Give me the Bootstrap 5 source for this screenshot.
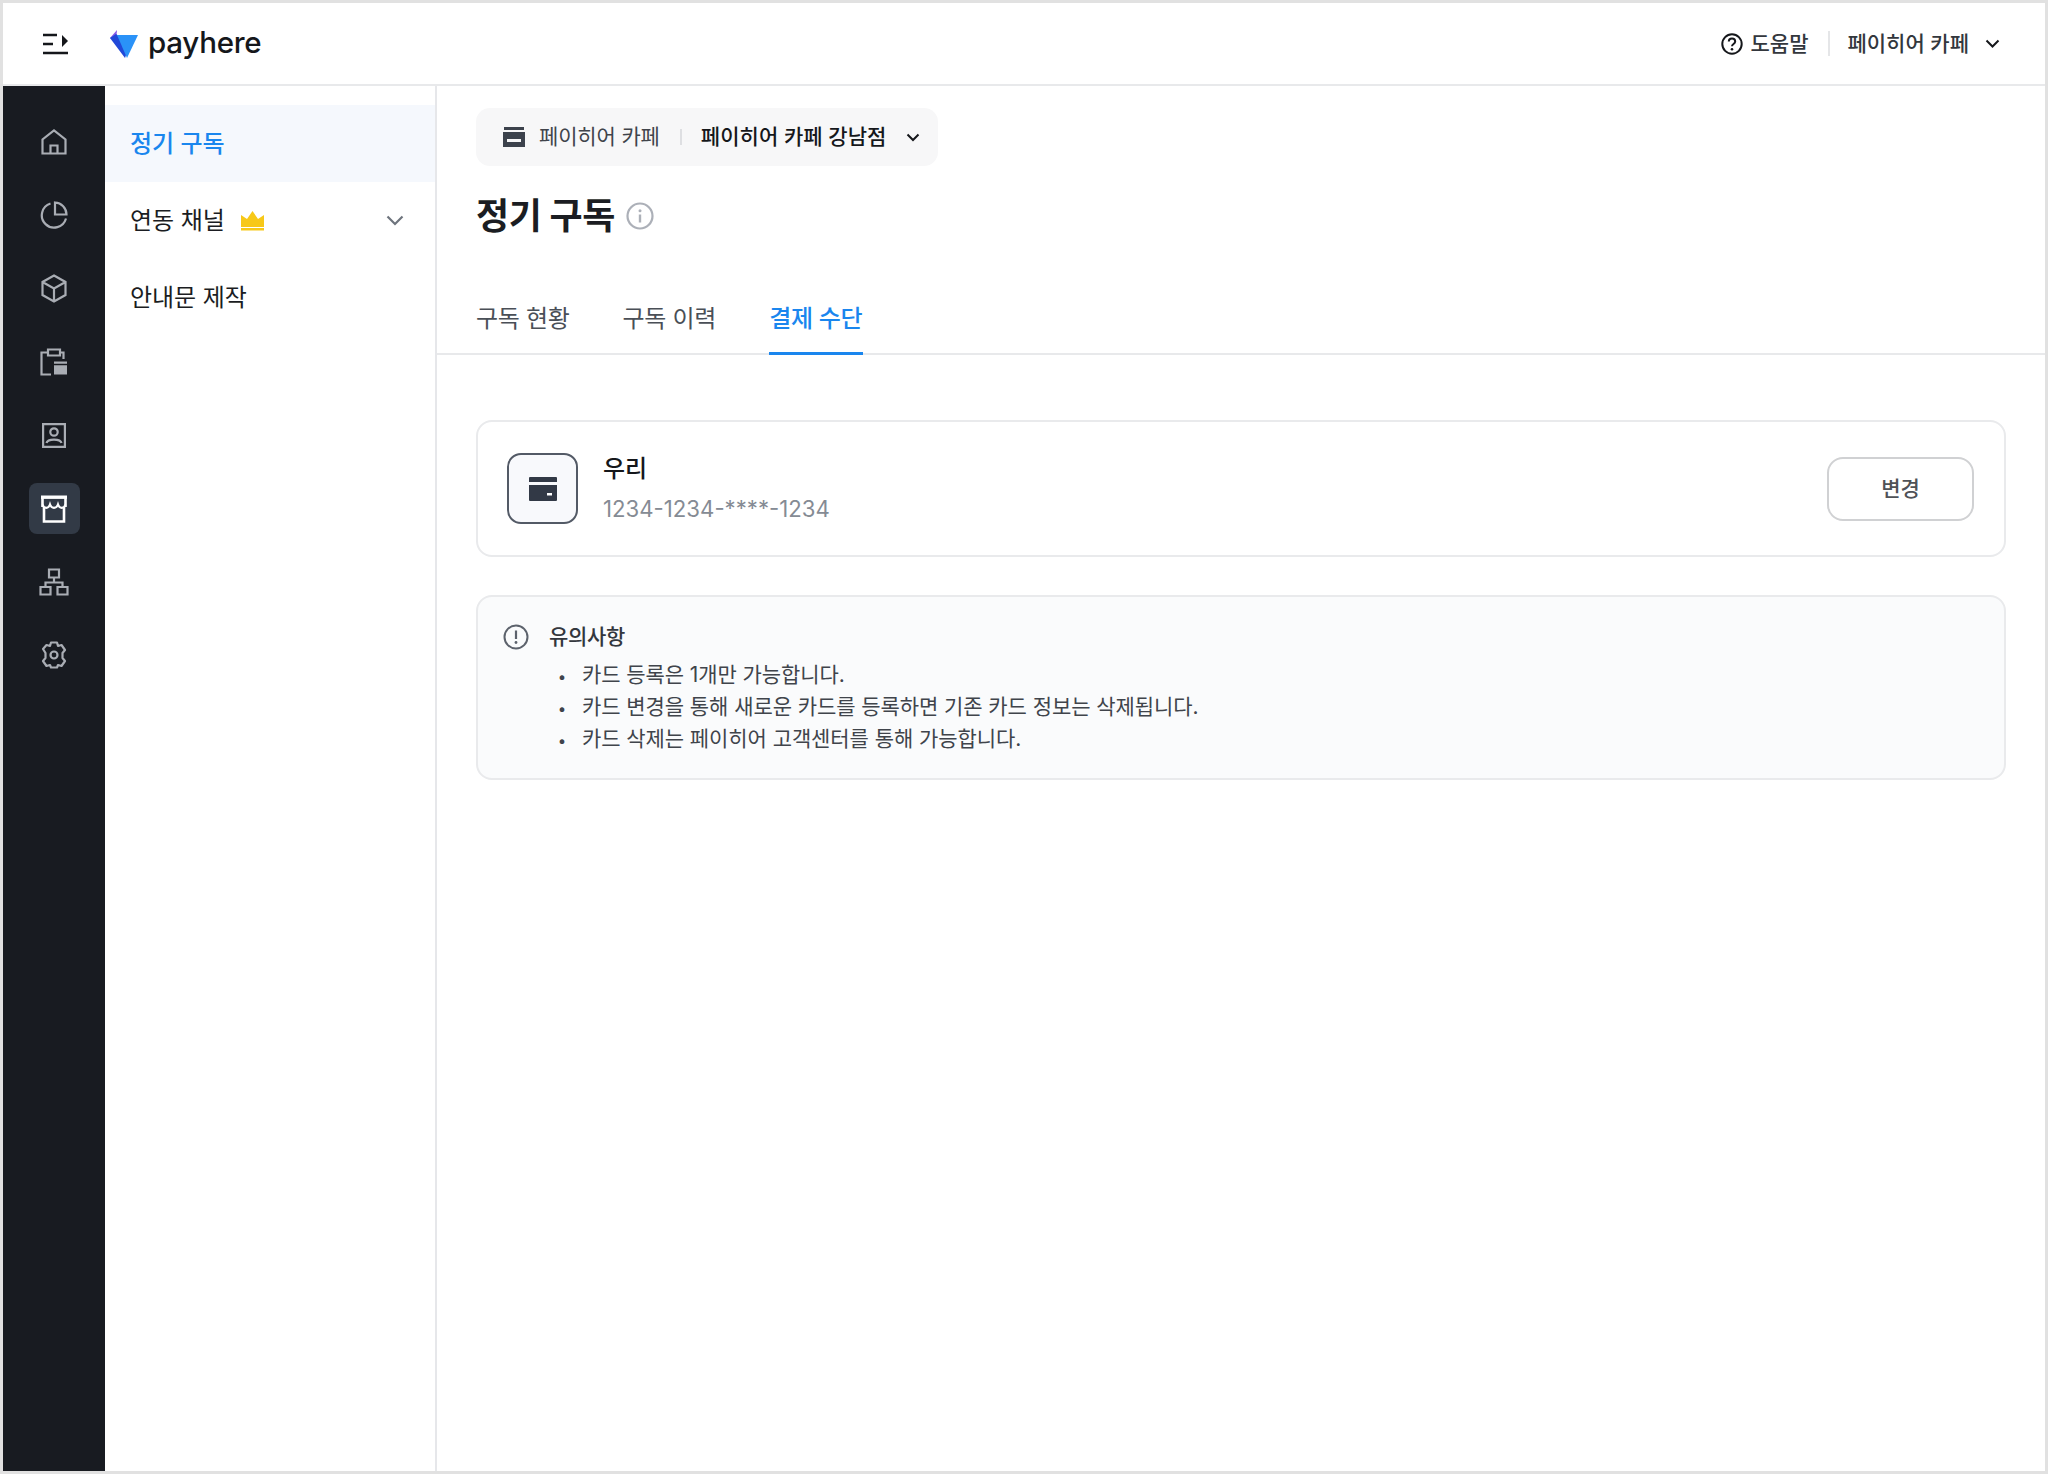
<!doctype html>
<html lang="ko"><head><meta charset="utf-8"><title>payhere</title>
<link href="https://cdn.jsdelivr.net/npm/bootstrap@5.3.0/dist/css/bootstrap.min.css" rel="stylesheet">
<style>
html,body{height:100%}
body{font-family:Inter,"Noto Sans CJK KR",sans-serif;color:#1b1d22;background:#fff;overflow:hidden}
.frame{height:1474px;border:3px solid #e1e1e1;display:flex;flex-direction:column}
.topbar{height:83px;border-bottom:2px solid #e8e9eb;padding-left:39px;padding-right:45px;flex:none}
.brand{font-size:29.5px;font-weight:500;letter-spacing:-.25px;line-height:1;margin-left:9px;margin-top:-2px;color:#15171b}
.logo-wrap{margin-left:40px}
.top-txt{font-size:21px;font-weight:500;color:#33373d}
.vsep{width:2px;height:25px;background:#e5e6e8;margin:0 17px 0 20px}
.rail{width:102px;background:#181b21;flex:none;padding-top:19px}
.rail-item{height:73.4px;display:flex;align-items:center;justify-content:center}
.rail-box{width:51px;height:51px;border-radius:8px;display:flex;align-items:center;justify-content:center}
.rail-box.on{background:#323a46}
.menu{width:332px;flex:none;border-right:2px solid #e6e7ea;padding-top:19px}
.menu-row{height:77px;padding-left:25px;padding-right:31px;font-size:24px;line-height:1;letter-spacing:-.05px;color:#1b1d22}
.menu-row.on{background:#f5f8fd;color:#1a86ee;font-weight:500;margin-bottom:0}
.main{flex:1;min-width:0;padding-top:22px}
.pad{padding-left:39px;padding-right:39px}
.pill{display:inline-flex;height:58px;width:462px;background:#f7f7f8;border-radius:14px;padding-left:27px;font-size:21px}
.pill .a{color:#40444b;margin-left:14px;letter-spacing:-.15px}
.pill .b{color:#15171b;font-weight:500;letter-spacing:.05px}
.pill .sep{width:2px;height:16px;background:#dedfe2;margin:0 19px 0 20px}
.ttl{font-size:36px;font-weight:700;letter-spacing:-.4px;line-height:1;margin:32px 0 0;color:#1b1d22}
.tabs{margin-top:46px;border-bottom:2px solid #e8e9eb;height:75px;gap:52px}
.tabitem{font-size:24px;color:#4a4f57;letter-spacing:-.3px;height:75px;line-height:78px;margin-bottom:-2px;padding:0 1px 0 0}
.tabitem.on{color:#1a86ee;font-weight:500;border-bottom:3px solid #1a86ee}
.paycard{margin-top:65px;height:137px;border:2px solid #e9eaec;border-radius:16px;padding-left:29px;padding-right:30px}
.cardicon{width:71px;height:71px;border:2px solid #535a66;border-radius:14px;background:#f8f9fc}
.cname{font-size:24px;font-weight:500;line-height:1;margin-bottom:17px;color:#15171b}
.cnum{font-size:22.2px;color:#858b94;line-height:1}
.chg{width:147px;height:64px;border:2px solid #d0d1d3;border-radius:16px;background:#fff;font-size:21px;font-weight:500;color:#4f5257;padding:0}
.notice{margin-top:38px;height:185px;border:2px solid #e9eaec;border-radius:16px;background:#fafbfc;padding:24px 25px}
.ntitle{font-size:21px;font-weight:500;letter-spacing:-.3px;color:#33373d;line-height:32px;margin-left:20px}
.nlist{margin:6px 0 0;padding:0 0 0 79px;font-size:21px;line-height:32px;letter-spacing:-.08px;color:#40444b}
.nlist li::marker{font-size:15px;content:"•\00a0\00a0\00a0\00a0"}
</style></head><body>
<div class="frame">
<header class="topbar d-flex align-items-center">
<svg width="27" height="24" viewBox="0 0 27 24"><g fill="none" stroke="#15171b" stroke-width="2.4"><path d="M1 3h14M1 12h10M1 21h25"/></g><path d="M20 3l6 6-6 6z" fill="#15171b"/></svg>
<span class="logo-wrap d-inline-flex"><svg width="30" height="30" viewBox="0 0 30 30"><path d="M8 1L1 9l6 3z" fill="#8a5be8"/><path d="M1 9l15 20 5-14L7 5z" fill="#2148d8"/><path d="M8 6l21 0-11 23z" fill="#2a92f8"/></svg></span>
<span class="brand">payhere</span>
<div class="ms-auto d-flex align-items-center">
<svg width="22" height="22" viewBox="0 0 22 22"><circle cx="11" cy="11" r="9.7" fill="none" stroke="#15171b" stroke-width="2"/><path d="M7.8 8.6c0-4 6.4-4 6.4 0 0 2.400-3.200 2.400-3.200 4.600" fill="none" stroke="#15171b" stroke-width="2"/><circle cx="11" cy="16.200" r="1.300" fill="#15171b"/></svg>
<span class="top-txt ms-2">도움말</span>
<span class="vsep"></span>
<span class="top-txt">페이히어 카페</span>
<svg class="ms-3" width="15" height="9" viewBox="0 0 15 9"><path d="M1.500 1.500l6 6 6-6" fill="none" stroke="#15171b" stroke-width="2"/></svg>
</div>
</header>
<div class="d-flex flex-grow-1" style="min-height:0">
<nav class="rail">
<div class="rail-item"><div class="rail-box"><svg width="26" height="26" viewBox="0 0 26 26" fill="none" stroke="#a9adb4" stroke-width="2.200"><path d="M1.500 24.500V10.500L13 1.500l11.500 9v14zM9.500 24.500v-8h7v8"/></svg></div></div>
<div class="rail-item"><div class="rail-box"><svg width="28" height="28" viewBox="0 0 28 28" fill="none" stroke="#a9adb4" stroke-width="2.200"><path d="M10.500 2.500A12.300 12.300 0 1 0 26 17.500"/><path d="M15 1.500A12 12 0 0 1 26.500 13.500H15z"/></svg></div></div>
<div class="rail-item"><div class="rail-box"><svg width="26" height="29" viewBox="0 0 26 29" fill="none" stroke="#a9adb4" stroke-width="2.200"><path d="M13 1.500l11.500 6.500v13L13 27.500 1.500 21V8zM1.500 8L13 14.500 24.500 8M13 14.500v13"/></svg></div></div>
<div class="rail-item"><div class="rail-box"><svg width="28" height="28" viewBox="0 0 28 28" fill="none" stroke="#a9adb4" stroke-width="2.200"><path d="M8 4.500H1.500v22H11M20 4.500h3.500V11M8 1.500h12v6H8z"/><path d="M14 13.500h13v13H14z" fill="#a9adb4" stroke="none"/><path d="M14 16.500h13" stroke="#181b21" stroke-width="1.500"/></svg></div></div>
<div class="rail-item"><div class="rail-box"><svg width="24" height="25" viewBox="0 0 24 25" fill="none" stroke="#a9adb4" stroke-width="2.200"><path d="M1.100 1.100h21.800v22.800H1.100z"/><circle cx="12" cy="9" r="3.700"/><path d="M4.500 20c1-4.500 14-4.500 15 0"/></svg></div></div>
<div class="rail-item"><div class="rail-box on"><svg width="28" height="28" viewBox="0 0 28 28" fill="none" stroke="#fff"><path d="M1 2.200h26" stroke-width="3.400"/><path d="M2.500 3v9M25.500 3v9M4 12v14.500h20V12" stroke-width="2.600"/><path d="M2.500 9.500c1.500 4.500 6 4.500 7.500 0 1.500 4.500 6.500 4.500 8 0 1.500 4.500 6 4.500 7.500 0" stroke-width="2.200"/></svg></div></div>
<div class="rail-item"><div class="rail-box"><svg width="30" height="28" viewBox="0 0 30 28" fill="none" stroke="#a9adb4" stroke-width="2.200"><path d="M10 1.500h10v8H10zM1.500 19h10v7.500h-10zM18.500 19h10v7.500h-10zM15 9.500V14.500M6.500 19v-4.500h17V19"/></svg></div></div>
<div class="rail-item"><div class="rail-box"><svg width="26" height="28" viewBox="0 0 26 28" fill="none" stroke="#a9adb4" stroke-width="2.200" stroke-linejoin="round"><path d="M10 1.500h6l1 3.500 3.500-1 3.500 5-2.500 3v5l2.500 3-3.500 5-3.500-1-1 2.500h-6l-1-2.500-3.500 1-3.500-5 2.500-3v-5L2 8l3.500-4 3.500 1z"/><circle cx="13" cy="14" r="3.500"/></svg></div></div>
</nav>
<aside class="menu">
<div class="menu-row on d-flex align-items-center">정기 구독</div>
<div class="menu-row d-flex align-items-center">연동 채널
<svg class="ms-3" width="23" height="20" viewBox="0 0 23 20"><path d="M0 4l6 4 5.500-8L17 8l6-4v12H0z" fill="#f7c818"/><path d="M0 17h23v2.500H0z" fill="#f7c818"/></svg>
<svg class="ms-auto" width="18" height="11" viewBox="0 0 18 11"><path d="M1.500 1.500L9 9l7.500-7.500" fill="none" stroke="#6e747d" stroke-width="2.200"/></svg></div>
<div class="menu-row d-flex align-items-center">안내문 제작</div>
</aside>
<main class="main">
<div class="pad">
<div class="pill align-items-center">
<svg width="22" height="20" viewBox="0 0 22 20"><path d="M1 0h20v3H1zM0 5h22v15H0z" fill="#3c424c"/><path d="M4 12h14v3H4z" fill="#f7f7f8"/></svg>
<span class="a">페이히어 카페</span><span class="sep"></span><span class="b">페이히어 카페 강남점</span>
<svg style="margin-left:20px" width="14" height="9" viewBox="0 0 14 9"><path d="M1.500 1.500L7 7l5.500-5.500" fill="none" stroke="#15171b" stroke-width="2"/></svg>
</div>
<div class="d-flex align-items-center"><h1 class="ttl">정기 구독</h1>
<svg style="margin-top:31px;margin-left:11px" width="28" height="28" viewBox="0 0 28 28"><circle cx="14" cy="14" r="12.500" fill="none" stroke="#acb0b8" stroke-width="2.200"/><circle cx="14" cy="8.800" r="1.500" fill="#acb0b8"/><path d="M14 12.500v8" stroke="#acb0b8" stroke-width="2.400"/></svg></div>
</div>
<div class="tabs d-flex pad">
<div class="tabitem">구독 현황</div><div class="tabitem">구독 이력</div><div class="tabitem on">결제 수단</div>
</div>
<div class="pad">
<section class="paycard d-flex align-items-center">
<div class="cardicon d-flex align-items-center justify-content-center"><svg width="28" height="24" viewBox="0 0 28 24"><path d="M1 0h26a1 1 0 0 1 1 1v4H0V1a1 1 0 0 1 1-1zM0 8h28v15a1 1 0 0 1-1 1H1a1 1 0 0 1-1-1z" fill="#323946"/><path d="M18 16h5v2.500h-5z" fill="#fff"/></svg></div>
<div style="margin-left:25px"><div class="cname">우리</div><div class="cnum">1234-1234-****-1234</div></div>
<button class="chg btn ms-auto" type="button">변경</button>
</section>
<section class="notice">
<div class="d-flex align-items-center"><svg width="26" height="26" viewBox="0 0 26 26"><circle cx="13" cy="13" r="11.500" fill="none" stroke="#5c626c" stroke-width="2"/><path d="M13 6.500v8.500" stroke="#5c626c" stroke-width="2.200"/><circle cx="13" cy="18.500" r="1.400" fill="#5c626c"/></svg><span class="ntitle">유의사항</span></div>
<ul class="nlist"><li>카드 등록은 1개만 가능합니다.</li><li>카드 변경을 통해 새로운 카드를 등록하면 기존 카드 정보는 삭제됩니다.</li><li>카드 삭제는 페이히어 고객센터를 통해 가능합니다.</li></ul>
</section>
</div>
</main>
</div>
</div>
<script src="https://cdn.jsdelivr.net/npm/bootstrap@5.3.0/dist/js/bootstrap.bundle.min.js"></script>
</body></html>
